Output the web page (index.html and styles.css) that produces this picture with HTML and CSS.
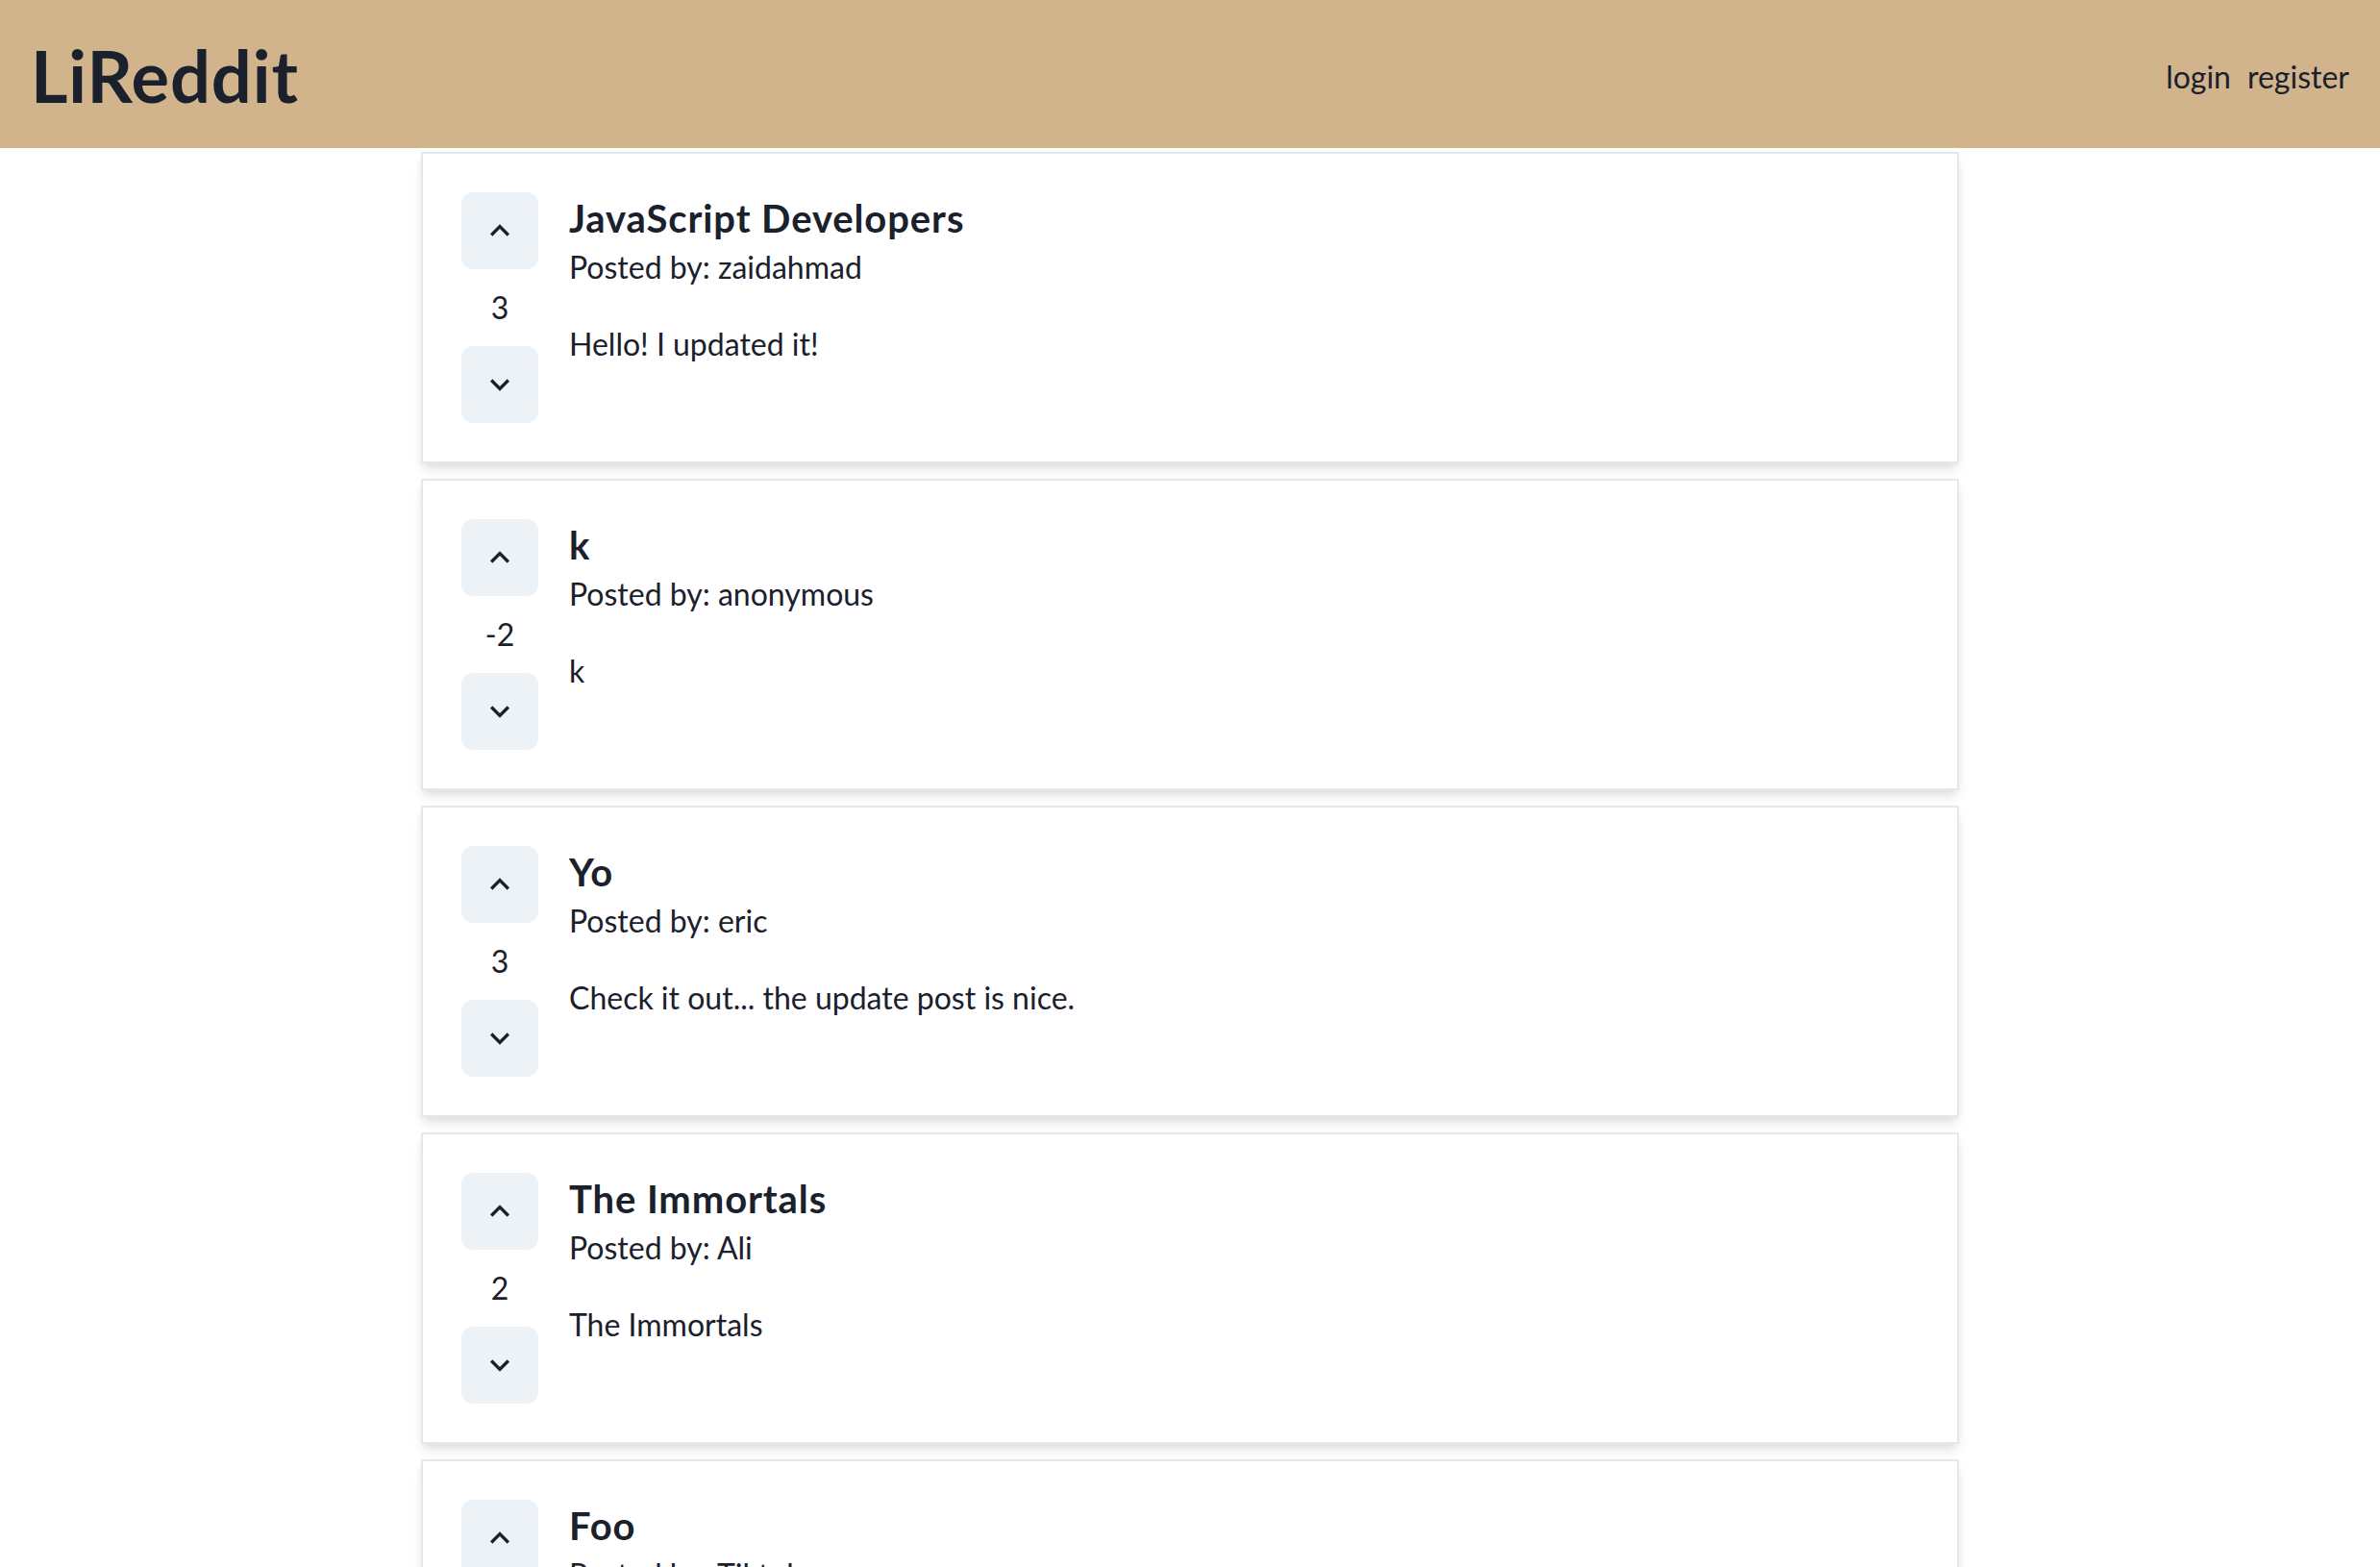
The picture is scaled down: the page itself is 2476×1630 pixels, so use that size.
FILE: index.html
```html
<!DOCTYPE html>
<html lang="en">
<head>
<meta charset="utf-8">
<title>LiReddit</title>
<link rel="stylesheet" href="styles.css">
</head>
<body>
<header class="navbar">
  <div class="logo">LiReddit</div>
  <nav class="nav-links">
    <a class="nav-link" href="#">login</a>
    <a class="nav-link" href="#">register</a>
  </nav>
</header>
<main class="feed">
  <article class="post">
    <div class="vote">
      <button class="vote-btn" aria-label="upvote"><svg viewBox="0 0 24 24"><path d="M12 8l-6 6 1.41 1.41L12 10.83l4.59 4.58L18 14z"/></svg></button>
      <div class="points">3</div>
      <button class="vote-btn" aria-label="downvote"><svg viewBox="0 0 24 24"><path d="M16.59 8.59L12 13.17 7.41 8.59 6 10l6 6 6-6z"/></svg></button>
    </div>
    <div class="post-body">
      <h2 class="post-title">JavaScript Developers</h2>
      <p class="post-author">Posted by: zaidahmad</p>
      <p class="post-text">Hello! I updated it!</p>
    </div>
  </article>
  <article class="post">
    <div class="vote">
      <button class="vote-btn" aria-label="upvote"><svg viewBox="0 0 24 24"><path d="M12 8l-6 6 1.41 1.41L12 10.83l4.59 4.58L18 14z"/></svg></button>
      <div class="points">-2</div>
      <button class="vote-btn" aria-label="downvote"><svg viewBox="0 0 24 24"><path d="M16.59 8.59L12 13.17 7.41 8.59 6 10l6 6 6-6z"/></svg></button>
    </div>
    <div class="post-body">
      <h2 class="post-title">k</h2>
      <p class="post-author">Posted by: anonymous</p>
      <p class="post-text">k</p>
    </div>
  </article>
  <article class="post">
    <div class="vote">
      <button class="vote-btn" aria-label="upvote"><svg viewBox="0 0 24 24"><path d="M12 8l-6 6 1.41 1.41L12 10.83l4.59 4.58L18 14z"/></svg></button>
      <div class="points">3</div>
      <button class="vote-btn" aria-label="downvote"><svg viewBox="0 0 24 24"><path d="M16.59 8.59L12 13.17 7.41 8.59 6 10l6 6 6-6z"/></svg></button>
    </div>
    <div class="post-body">
      <h2 class="post-title">Yo</h2>
      <p class="post-author">Posted by: eric</p>
      <p class="post-text">Check it out... the update post is nice.</p>
    </div>
  </article>
  <article class="post">
    <div class="vote">
      <button class="vote-btn" aria-label="upvote"><svg viewBox="0 0 24 24"><path d="M12 8l-6 6 1.41 1.41L12 10.83l4.59 4.58L18 14z"/></svg></button>
      <div class="points">2</div>
      <button class="vote-btn" aria-label="downvote"><svg viewBox="0 0 24 24"><path d="M16.59 8.59L12 13.17 7.41 8.59 6 10l6 6 6-6z"/></svg></button>
    </div>
    <div class="post-body">
      <h2 class="post-title">The Immortals</h2>
      <p class="post-author">Posted by: Ali</p>
      <p class="post-text">The Immortals</p>
    </div>
  </article>
  <article class="post">
    <div class="vote">
      <button class="vote-btn" aria-label="upvote"><svg viewBox="0 0 24 24"><path d="M12 8l-6 6 1.41 1.41L12 10.83l4.59 4.58L18 14z"/></svg></button>
      <div class="points">1</div>
      <button class="vote-btn" aria-label="downvote"><svg viewBox="0 0 24 24"><path d="M16.59 8.59L12 13.17 7.41 8.59 6 10l6 6 6-6z"/></svg></button>
    </div>
    <div class="post-body">
      <h2 class="post-title">Foo</h2>
      <p class="post-author">Posted by: Tiktok</p>
      <p class="post-text">Bar</p>
    </div>
  </article>
</main>
</body>
</html>
```

FILE: styles.css
```css
* {
  box-sizing: border-box;
}

html, body {
  margin: 0;
  padding: 0;
  background: #ffffff;
}

body {
  font-family: Lato, "Open Sans", sans-serif;
  color: #1a202c;
  font-size: 32px;
  line-height: 48px;
}

.navbar {
  display: flex;
  align-items: center;
  justify-content: space-between;
  background: #d2b48c;
  padding: 32px 32px;
  height: 154px;
}

.logo {
  font-size: 74px;
  font-weight: 700;
  line-height: 90px;
  letter-spacing: 0.9px;
  padding-top: 4px;
}

.nav-links {
  display: flex;
  gap: 17px;
  padding-top: 5px;
}

.nav-link {
  color: #1a202c;
  text-decoration: none;
  font-size: 32px;
  line-height: 48px;
}

.feed {
  width: 1600px;
  margin: 4px auto 0;
  display: flex;
  flex-direction: column;
  gap: 16px;
}

.post {
  display: flex;
  align-items: flex-start;
  padding: 40px;
  border: 2px solid #e2e8f0;
  box-shadow: 0 8px 12px -2px rgba(0, 0, 0, 0.1), 0 4px 8px -2px rgba(0, 0, 0, 0.06);
  background: #fff;
}

.vote {
  display: flex;
  flex-direction: column;
  align-items: center;
  width: 80px;
}

.vote-btn {
  width: 80px;
  height: 80px;
  border: none;
  border-radius: 12px;
  background: #edf2f7;
  display: flex;
  align-items: center;
  justify-content: center;
  padding: 0;
  cursor: pointer;
}

.vote-btn svg {
  width: 40px;
  height: 40px;
  fill: #1a202c;
}

.points {
  height: 80px;
  line-height: 80px;
  font-size: 32px;
  text-align: center;
}

.post-body {
  margin-left: 32px;
}

.post-title {
  margin: 0;
  padding-top: 3px;
  font-size: 40px;
  font-weight: 700;
  line-height: 48px;
  letter-spacing: 0.9px;
}

.post-author {
  margin: 3px 0 0;
  font-size: 32px;
  line-height: 48px;
}

.post-text {
  margin: 32px 0 0;
  font-size: 32px;
  line-height: 48px;
}
```
